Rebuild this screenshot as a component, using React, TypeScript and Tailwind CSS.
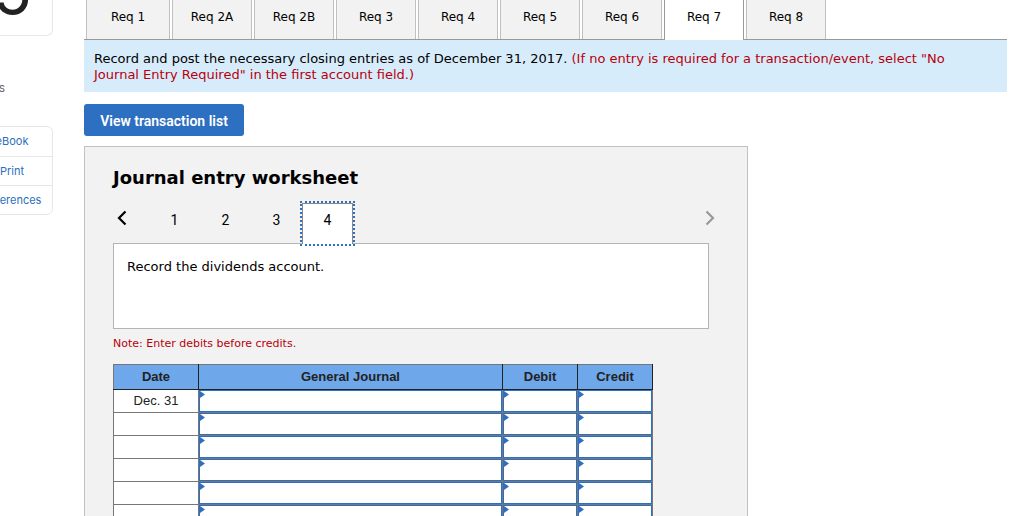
const tabs = ["Req 1", "Req 2A", "Req 2B", "Req 3", "Req 4", "Req 5", "Req 6", "Req 7", "Req 8"];
const activeTab = "Req 7";
const steps = ["1", "2", "3", "4"];
const activeStep = "4";
const resources = ["eBook", "Print", "References"];
const rows = ["Dec. 31", "", "", "", "", "", "", ""];
const fields = ["General Journal", "Debit", "Credit"];

function Sidebar() {
  return (
    <aside className="flex w-[53px] shrink-0 flex-col items-end overflow-hidden font-['Inter','Liberation_Sans',sans-serif]">
      <div className="flex h-9 w-[104px] shrink-0 items-end justify-end overflow-hidden rounded-b-md border border-t-0 border-gray-200 pr-5 pb-3">
        <span className="text-[64px] leading-none text-[#222]">5</span>
      </div>
      <p className="mt-11 w-[104px] pr-12 text-right text-xs leading-4 text-[#666]">points</p>
      <nav className="mt-[30px] w-[82px] rounded-md border border-gray-200 text-[11px] text-[#2c6fbf]">
        {resources.map((name) => (
          <a
            key={name}
            href="#"
            className="block border-b border-gray-200 text-center leading-7 first:leading-[29px] last:border-b-0"
          >
            {name}
          </a>
        ))}
      </nav>
    </aside>
  );
}

function RequirementTabs() {
  return (
    <div role="tablist" className="flex h-10 gap-0.5 border-b border-[#999] pl-0.5">
      {tabs.map((tab) => (
        <button
          key={tab}
          role="tab"
          aria-selected={tab === activeTab}
          className={
            tab === activeTab
              ? "-mb-px w-20 border-x border-[#999] bg-white pb-1.5 text-xs"
              : "w-20 border-x border-[#c0c0c0] bg-[#f2f2f2] pb-[5px] text-xs first:w-[84px]"
          }
        >
          {tab}
        </button>
      ))}
    </div>
  );
}

function StepTabs() {
  return (
    <div className="mr-7 flex h-10 items-stretch">
      <button aria-label="Previous" className="w-[18px] pb-2.5">
        <svg viewBox="0 0 18 16" className="h-4 w-[18px]" fill="none" stroke="#000" strokeWidth="2.2">
          <path d="M12.5 1.5 6 8l6.5 6.5" />
        </svg>
      </button>
      <div role="tablist" className="ml-[18px] flex flex-1 font-['Roboto','Liberation_Sans',sans-serif] text-sm">
        {steps.map((step) => (
          <button
            key={step}
            role="tab"
            aria-selected={step === activeStep}
            className={
              step === activeStep
                ? "relative -mb-px w-[51px] border border-b-0 border-[#888] bg-white pb-2 outline-2 outline-dotted outline-[#2d6fc0]"
                : "w-[51px] pb-1.5"
            }
          >
            {step}
          </button>
        ))}
      </div>
      <button aria-label="Next" className="w-[18px] pb-2.5">
        <svg viewBox="0 0 18 16" className="h-4 w-[18px]" fill="none" stroke="#999" strokeWidth="2.2">
          <path d="m5.5 1.5 6.5 6.5-6.5 6.5" />
        </svg>
      </button>
    </div>
  );
}

function JournalTable() {
  return (
    <table className="mt-3 w-[540px] table-fixed border-collapse border border-[#777] bg-white font-['Liberation_Sans',Arial,sans-serif] text-[13px] text-[#222]">
      <colgroup>
        <col className="w-[85px]" />
        <col />
        <col className="w-[75px]" />
        <col className="w-[75px]" />
      </colgroup>
      <thead>
        <tr className="h-[25px] bg-[#6fa8ea]">
          {["Date", ...fields].map((name) => (
            <th key={name} className="border-x border-b border-[#222] p-0 font-bold first:border-l-[#777]">
              {name}
            </th>
          ))}
        </tr>
      </thead>
      <tbody>
        {rows.map((date, i) => (
          <tr key={i} className="h-[23px]">
            <td className="border border-[#777] p-0 text-center leading-[22px]">{date}</td>
            {fields.map((field) => (
              <td key={field} className="relative border border-[#777] p-0">
                <input
                  aria-label={`${field}, row ${i + 1}`}
                  className="block h-[22px] w-full border border-[#2d6fc0] bg-white px-2 outline-none"
                />
                <svg viewBox="0 0 5 7" className="absolute top-px left-px h-[7px] w-[5px]" fill="#2d6fc0">
                  <path d="M0 0l5 3.5-5 3.5z" />
                </svg>
              </td>
            ))}
          </tr>
        ))}
      </tbody>
    </table>
  );
}

export default function App() {
  return (
    <div className="flex h-screen overflow-hidden bg-white font-['DejaVu_Sans',Verdana,sans-serif] text-black">
      <Sidebar />
      <main className="min-w-0 flex-1 pr-3.5 pl-[31px]">
        <RequirementTabs />
        <p className="bg-[#d7ecfb] pt-[11px] pr-10 pb-[9px] pl-2.5 text-[13px] leading-4">
          Record and post the necessary closing entries as of December 31, 2017.{" "}
          <span className="text-[#b8000b]">
            (If no entry is required for a transaction/event, select "No Journal Entry Required" in the first account
            field.)
          </span>
        </p>
        <button className="mt-3 block h-8 w-40 rounded-[3px] bg-[#2d6fc0] pt-px font-['Roboto','Liberation_Sans',sans-serif] text-sm font-semibold text-white">
          View transaction list
        </button>
        <section className="mt-2.5 max-w-[664px] border border-[#c0c0c0] bg-[#f2f2f2] pt-[19px] pl-7">
          <h1 className="text-lg leading-6 font-bold">Journal entry worksheet</h1>
          <div className="mt-[13px]">
            <StepTabs />
            <div className="mr-[38px] h-[86px] border border-[#b4b4b4] bg-white px-[13px] py-[15px] text-[13px] leading-4">
              Record the dividends account.
            </div>
          </div>
          <p className="mt-[7px] text-[11px] leading-4 text-[#b8000b]">Note: Enter debits before credits.</p>
          <JournalTable />
        </section>
      </main>
    </div>
  );
}
